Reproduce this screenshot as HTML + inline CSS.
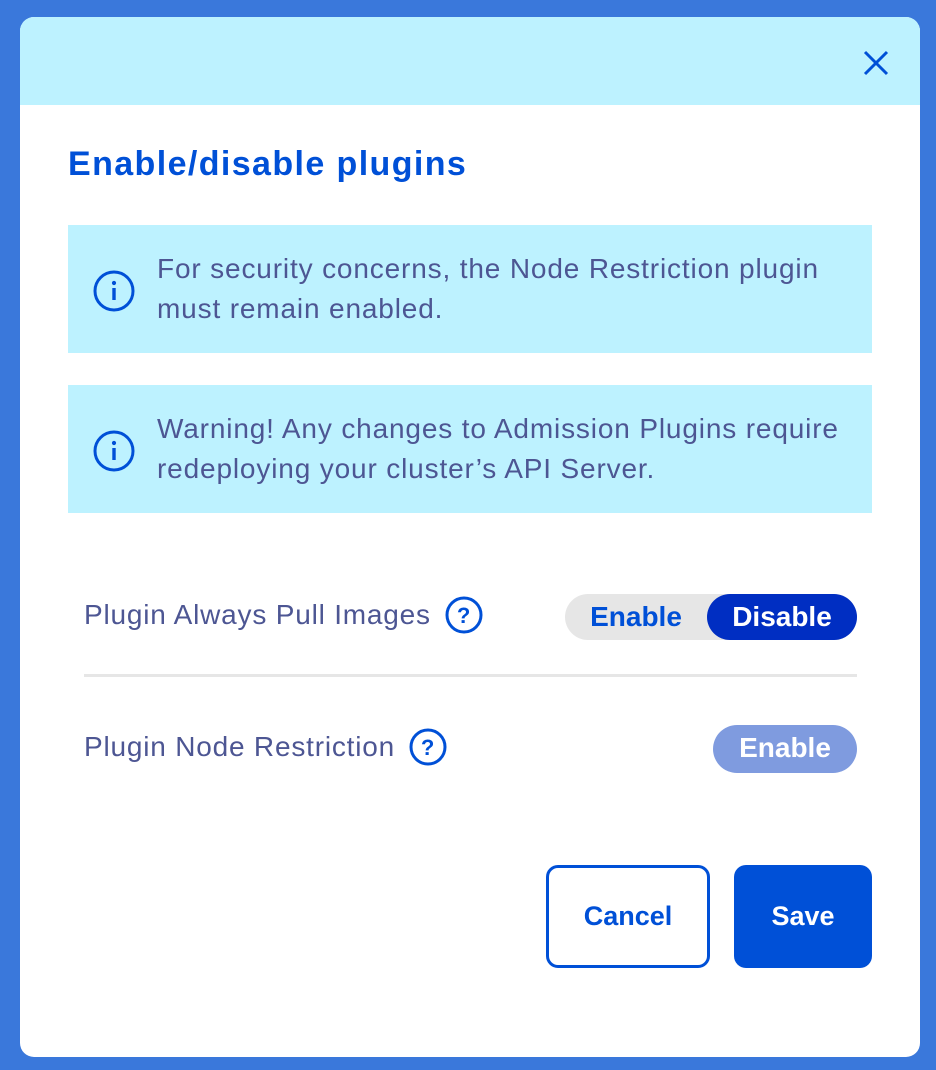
<!DOCTYPE html>
<html><head><style>
body{margin:0;width:936px;height:1070px;background:#3a78db;font-family:"Liberation Sans",sans-serif;position:relative;overflow:hidden}
.m{position:absolute;left:20px;top:17px;width:900px;height:1040px;background:#fff;border-radius:14px;overflow:hidden}
.h{height:88px;background:#bdf2ff}
.x{position:absolute;left:842px;top:32px}
h1{position:absolute;left:48px;top:128px;margin:0;font-size:34px;color:#0050d7;font-weight:bold;letter-spacing:1.4px;white-space:nowrap}
.b{position:absolute;left:48px;width:804px;height:128px;background:#bdf2ff;color:#4d5693;font-size:28px;line-height:40px;letter-spacing:0.85px}
.b p{margin:0;position:absolute;left:89px;top:24px;white-space:nowrap}
.b svg{position:absolute;left:25px;top:45px}
.l{position:absolute;left:64px;font-size:28px;color:#4d5693;letter-spacing:0.8px;white-space:nowrap}
.q{display:inline-block;vertical-align:middle;margin-left:14px;margin-top:-4px}
.t{position:absolute;border-radius:24px;font-weight:bold;font-size:28px;text-align:center;line-height:46px;height:46px}
.btn{position:absolute;top:848px;height:103px;border-radius:12px;font-weight:bold;font-size:27px;text-align:center;line-height:103px;box-sizing:border-box}
</style></head><body>
<div class="m">
<div class="h"></div>
<svg class="x" width="28" height="28" viewBox="0 0 28 28"><path d="M3 3L25 25M25 3L3 25" stroke="#0050d7" stroke-width="3"/></svg>
<h1>Enable/disable plugins</h1>
<div class="b" style="top:208px"><svg width="42" height="42" viewBox="0 0 42 42"><circle cx="21" cy="21" r="19" fill="none" stroke="#0050d7" stroke-width="3"/><rect x="19.3" y="18" width="3.4" height="12" fill="#0050d7"/><circle cx="21" cy="13" r="2.1" fill="#0050d7"/></svg><p>For security concerns, the Node Restriction plugin<br>must remain enabled.</p></div>
<div class="b" style="top:368px"><svg width="42" height="42" viewBox="0 0 42 42"><circle cx="21" cy="21" r="19" fill="none" stroke="#0050d7" stroke-width="3"/><rect x="19.3" y="18" width="3.4" height="12" fill="#0050d7"/><circle cx="21" cy="13" r="2.1" fill="#0050d7"/></svg><p>Warning! Any changes to Admission Plugins require<br>redeploying your cluster’s API Server.</p></div>
<div class="l" style="top:582px">Plugin Always Pull Images<svg class="q" width="38" height="38" viewBox="0 0 38 38"><circle cx="19" cy="19" r="17" fill="none" stroke="#0050d7" stroke-width="3"/><text x="19" y="27" font-size="22" font-weight="bold" fill="#0050d7" text-anchor="middle" font-family="Liberation Sans">?</text></svg></div>
<div class="t" style="left:545px;top:577px;width:292px;background:#e6e6e6;color:#0050d7"><span style="position:absolute;left:0;width:142px">Enable</span><span style="position:absolute;right:0;width:150px;background:#002ec2;color:#fff;border-radius:24px">Disable</span></div>
<div style="position:absolute;left:64px;top:657px;width:773px;height:3px;background:#e6e6e6"></div>
<div class="l" style="top:714px">Plugin Node Restriction<svg class="q" width="38" height="38" viewBox="0 0 38 38"><circle cx="19" cy="19" r="17" fill="none" stroke="#0050d7" stroke-width="3"/><text x="19" y="27" font-size="22" font-weight="bold" fill="#0050d7" text-anchor="middle" font-family="Liberation Sans">?</text></svg></div>
<div class="t" style="left:693px;top:708px;width:144px;height:48px;background:#7f9bdf;color:#fff">Enable</div>
<div class="btn" style="left:526px;width:164px;border:3px solid #0050d7;color:#0050d7;line-height:97px">Cancel</div>
<div class="btn" style="left:714px;width:138px;background:#0050d7;color:#fff">Save</div>
</div>
</body></html>
